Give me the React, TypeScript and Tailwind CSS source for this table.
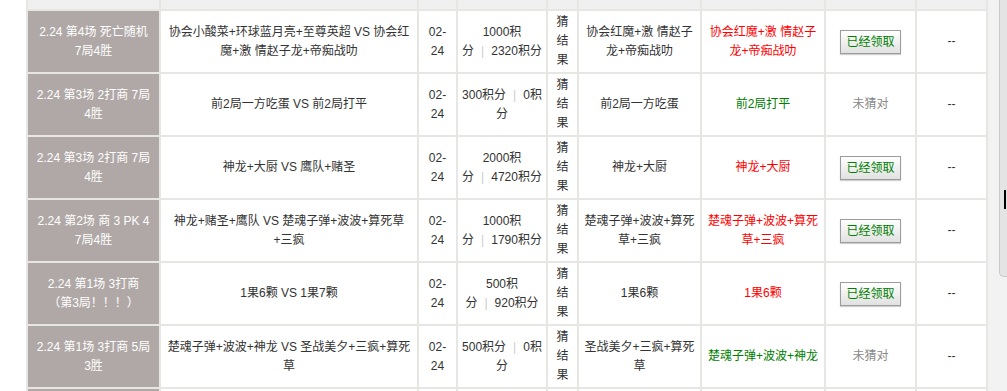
import React from 'react';

type Row = {
  title: string[];
  match: string[];
  reward: React.ReactNode;
  pick: string[];
  result: string[];
  win: boolean;
};

const Sep = () => <span className="mx-[7px] text-[#cccccc]">|</span>;

const rows: Row[] = [
  {
    title: ['2.24 第4场 死亡随机', '7局4胜'],
    match: ['协会小酸菜+环球蓝月亮+至尊英超 VS 协会红', '魔+激 情赵子龙+帝痴战叻'],
    reward: (<>1000积<br />分<Sep />2320积分</>),
    pick: ['协会红魔+激 情赵子', '龙+帝痴战叻'],
    result: ['协会红魔+激 情赵子', '龙+帝痴战叻'],
    win: true,
  },
  {
    title: ['2.24 第3场 2打商 7局', '4胜'],
    match: ['前2局一方吃蛋 VS 前2局打平'],
    reward: (<>300积分<Sep />0积<br />分</>),
    pick: ['前2局一方吃蛋'],
    result: ['前2局打平'],
    win: false,
  },
  {
    title: ['2.24 第3场 2打商 7局', '4胜'],
    match: ['神龙+大厨 VS 鹰队+赌圣'],
    reward: (<>2000积<br />分<Sep />4720积分</>),
    pick: ['神龙+大厨'],
    result: ['神龙+大厨'],
    win: true,
  },
  {
    title: ['2.24 第2场 商 3 PK 4', '7局4胜'],
    match: ['神龙+赌圣+鹰队 VS 楚魂子弹+波波+算死草', '+三疯'],
    reward: (<>1000积<br />分<Sep />1790积分</>),
    pick: ['楚魂子弹+波波+算死', '草+三疯'],
    result: ['楚魂子弹+波波+算死', '草+三疯'],
    win: true,
  },
  {
    title: ['2.24 第1场 3打商', '（第3局！！！）'],
    match: ['1果6颗 VS 1果7颗'],
    reward: (<>500积<br />分<Sep />920积分</>),
    pick: ['1果6颗'],
    result: ['1果6颗'],
    win: true,
  },
  {
    title: ['2.24 第1场 3打商 5局', '3胜'],
    match: ['楚魂子弹+波波+神龙 VS 圣战美夕+三疯+算死', '草'],
    reward: (<>500积分<Sep />0积<br />分</>),
    pick: ['圣战美夕+三疯+算死', '草'],
    result: ['楚魂子弹+波波+神龙'],
    win: false,
  },
];

const Lines = ({ lines }: { lines: string[] }) => (
  <span>
    {lines.map((l, i) => (
      <React.Fragment key={i}>
        {i > 0 && <br />}
        {l}
      </React.Fragment>
    ))}
  </span>
);

const cell = 'flex items-center justify-center bg-white text-center whitespace-nowrap';
const head = 'flex items-end justify-center bg-[#f0f0f0] pb-[4px] text-center';

export default function App() {
  return (
    <div className="flex w-[1007px] overflow-hidden bg-white pl-[26px] font-['Liberation_Sans','Noto_Sans_CJK_SC',sans-serif] text-[12px] leading-[19px] text-[#333333]">
      <div className="-mt-[33px] grid w-[962px] shrink-0 grid-cols-[131px_256px_37px_88px_29px_121px_122px_89px_69px] grid-rows-[40px] auto-rows-[61px] gap-[2px] bg-[#e6e6e3] p-[2px]">
        {/* header row, scrolled mostly out of view */}
        <div className={head} />
        <div className={head} />
        <div className={head}>时间</div>
        <div className={head}>得奖励</div>
        <div className={head}>法</div>
        <div className={head} />
        <div className={head} />
        <div className={head} />
        <div className={head} />

        {rows.map((r, i) => (
          <React.Fragment key={i}>
            <div className="flex items-center justify-center whitespace-nowrap bg-[#b0a8a6] text-center text-white">
              <Lines lines={r.title} />
            </div>
            <div className={cell}>
              <Lines lines={r.match} />
            </div>
            <div className={cell}>
              <span>02-<br />24</span>
            </div>
            <div className={cell}>
              <span>{r.reward}</span>
            </div>
            <div className={cell}>
              <span>猜<br />结<br />果</span>
            </div>
            <div className={cell}>
              <Lines lines={r.pick} />
            </div>
            <div className={cell + (r.win ? ' text-[#ff0000]' : ' text-[#008000]')}>
              <Lines lines={r.result} />
            </div>
            <div className={cell}>
              {r.win ? (
                <button className="h-[24px] border border-[#9c9c9c] bg-linear-to-b from-white to-[#e1e1e1] px-[5px] text-[12px] leading-[20px] text-[#008000] shadow-[0_1px_1px_#d0d0d0]">
                  已经领取
                </button>
              ) : (
                <span className="text-[#888888]">未猜对</span>
              )}
            </div>
            <div className={cell}>--</div>
          </React.Fragment>
        ))}

        <div className="bg-[#b0a8a6]" />
        <div className="bg-white" />
        <div className="bg-white" />
        <div className="bg-white" />
        <div className="bg-white" />
        <div className="bg-white" />
        <div className="bg-white" />
        <div className="bg-white" />
        <div className="bg-white" />
      </div>

      <div className="relative w-[19px] shrink-0 bg-[#f2f2f2]">
        <div className="ml-[11px] h-[277px] rounded-bl-[5px] border-b border-l border-[#c9c9c9] bg-[#e4e4e4]" />
        <div className="absolute left-[16px] top-[190px] h-[19px] w-[2px] bg-black" />
      </div>
    </div>
  );
}
